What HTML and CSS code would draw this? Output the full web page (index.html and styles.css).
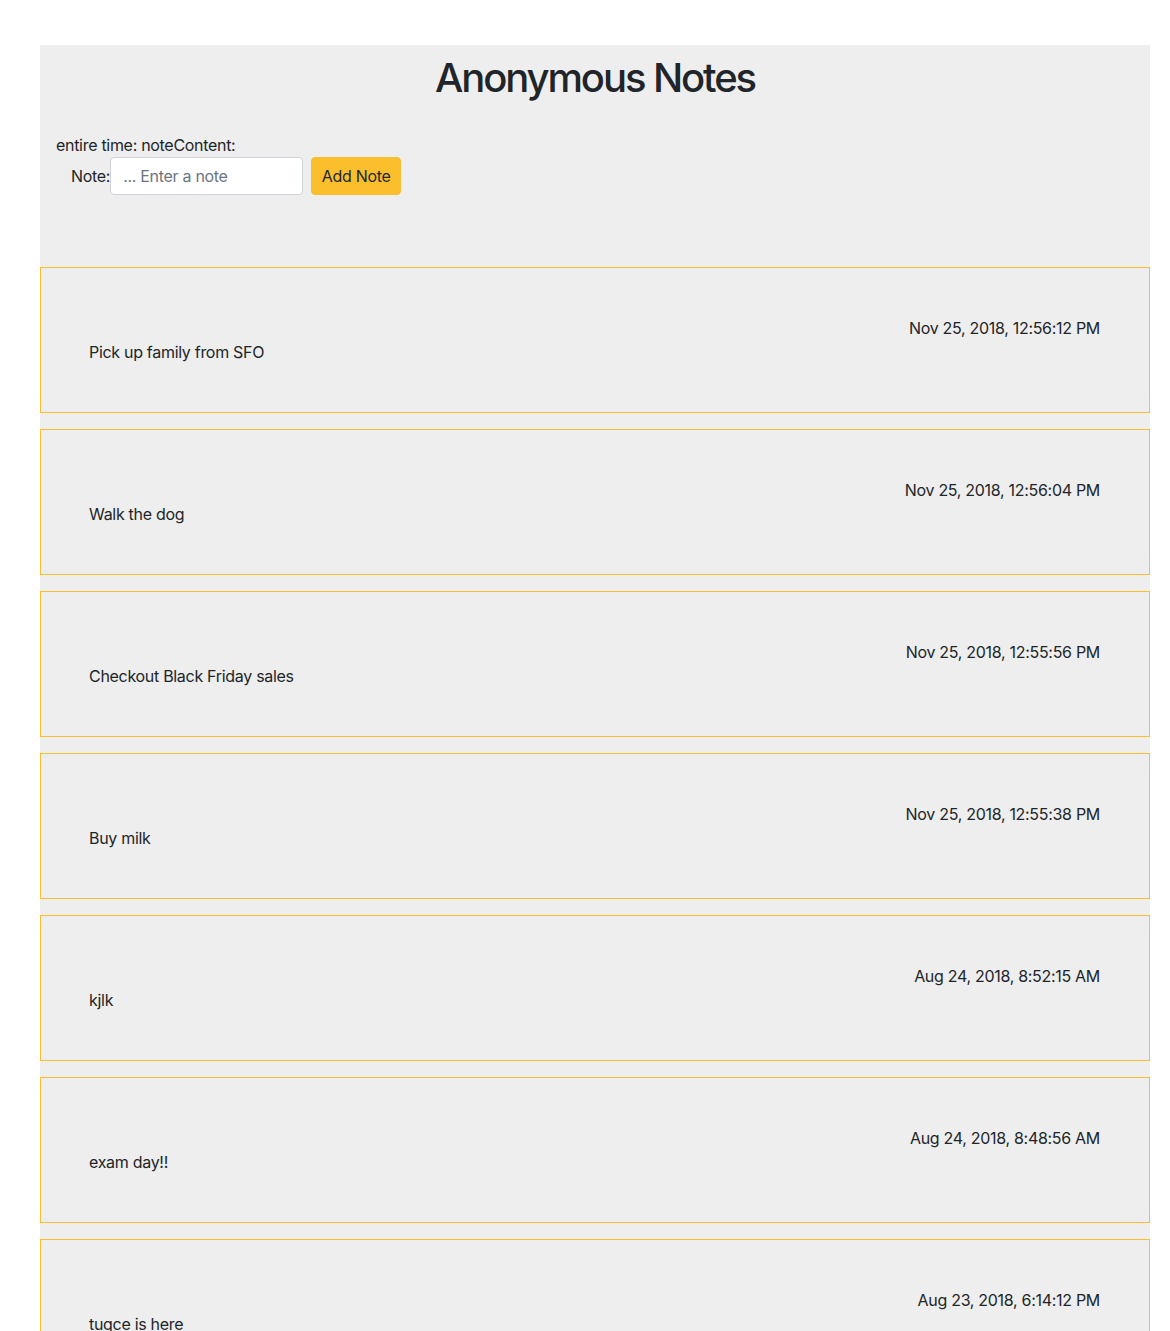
FILE: index.html
```html
<!DOCTYPE html>
<html>
<head>
<meta charset="utf-8">
<link rel="stylesheet" href="styles.css">
</head>
<body>
<div class="app">
  <header class="header">
    <h1 class="title">Anonymous Notes</h1>
    <div class="debug">entire time: noteContent:</div>
    <form class="note-form">
      <label class="note-label">Note:</label>
      <input class="note-input" type="text" placeholder="... Enter a note">
      <button class="add-btn" type="button">Add Note</button>
    </form>
  </header>
  <ul class="notes">
    <li class="note"><div class="note-date">Nov 25, 2018, 12:56:12 PM</div><div class="note-text">Pick up family from SFO</div></li>
    <li class="note"><div class="note-date">Nov 25, 2018, 12:56:04 PM</div><div class="note-text">Walk the dog</div></li>
    <li class="note"><div class="note-date">Nov 25, 2018, 12:55:56 PM</div><div class="note-text">Checkout Black Friday sales</div></li>
    <li class="note"><div class="note-date">Nov 25, 2018, 12:55:38 PM</div><div class="note-text">Buy milk</div></li>
    <li class="note"><div class="note-date">Aug 24, 2018, 8:52:15 AM</div><div class="note-text">kjlk</div></li>
    <li class="note"><div class="note-date">Aug 24, 2018, 8:48:56 AM</div><div class="note-text">exam day!!</div></li>
    <li class="note"><div class="note-date">Aug 23, 2018, 6:14:12 PM</div><div class="note-text">tugce is here</div></li>
  </ul>
</div>
</body>
</html>
```

FILE: styles.css
```css
* { box-sizing: border-box; }
html, body { margin: 0; padding: 0; background: #fff; }
body {
  font-family: Inter, "Noto Sans", sans-serif;
  font-size: 16px;
  line-height: 24px;
  color: #212529;
  letter-spacing: -0.3px;
}
.app {
  margin: 45px 20px 0 40px;
  width: 1110px;
  background: #eeeeee;
}
.header {
  padding: 9px 0 72px 0;
}
.title {
  margin: 0 0 31px 0;
  font-size: 40px;
  line-height: 48px;
  font-weight: 500;
  letter-spacing: -2.1px;
  text-align: center;
}
.debug {
  padding-left: 16px;
}
.note-form {
  display: flex;
  align-items: center;
  padding-left: 31px;
  margin: 0;
}
.note-label {
  margin-right: 0;
}
.note-input {
  width: 193px;
  height: 38px;
  border: 1px solid #ced4da;
  border-radius: 4px;
  padding: 6px 12px;
  font-family: inherit;
  font-size: 16px;
  letter-spacing: -0.3px;
  color: #495057;
  background: #fff;
}
.note-input::placeholder { color: #6c757d; }
.add-btn {
  margin-left: 8px;
  width: 90px;
  height: 38px;
  border: 1px solid #fbbf2d;
  border-radius: 4px;
  background: #fbbf2d;
  color: #212529;
  font-family: inherit;
  font-size: 16px;
  letter-spacing: -0.3px;
  padding: 6px 0;
  text-align: center;
  white-space: nowrap;
}
.notes {
  list-style: none;
  margin: 0;
  padding: 0;
  display: flex;
  flex-direction: column;
  gap: 16px;
}
.note {
  border: 1px solid #fbbf2d;
  padding: 48px 49px 48px 48px;
}
.note-date { text-align: right; }
```
